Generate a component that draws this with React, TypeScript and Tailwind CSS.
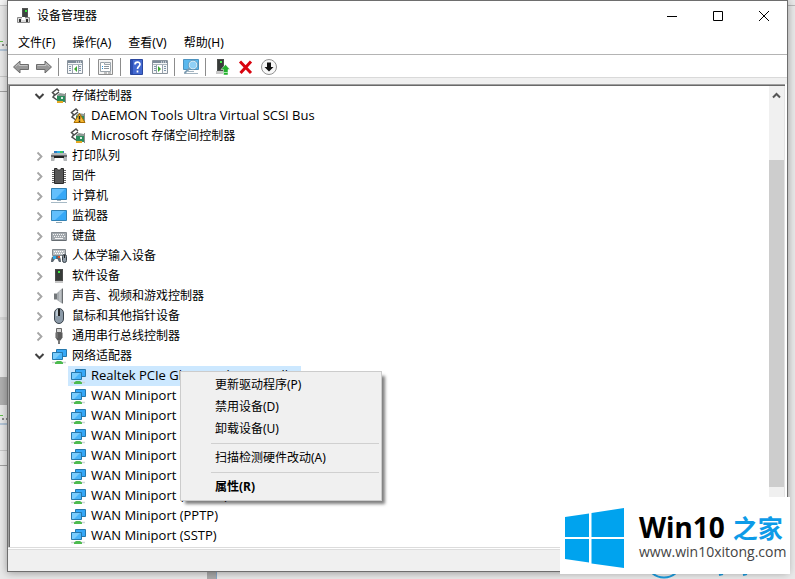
import { useState } from "react";
import type { ReactNode } from "react";

type IconName =
  | "storage"
  | "storageWarning"
  | "printer"
  | "chip"
  | "computer"
  | "monitor"
  | "keyboard"
  | "hid"
  | "tower"
  | "speaker"
  | "mouse"
  | "usb"
  | "network";

interface DeviceNode {
  label: string;
  icon: IconName;
  open?: boolean;
  children?: { label: string; suffix?: string; icon: IconName }[];
}

const menus = ["文件(F)", "操作(A)", "查看(V)", "帮助(H)"];

const devices: DeviceNode[] = [
  {
    label: "存储控制器",
    icon: "storage",
    open: true,
    children: [
      { label: "DAEMON Tools Ultra Virtual SCSI Bus", icon: "storageWarning" },
      { label: "Microsoft", suffix: "存储空间控制器", icon: "storage" },
    ],
  },
  { label: "打印队列", icon: "printer" },
  { label: "固件", icon: "chip" },
  { label: "计算机", icon: "computer" },
  { label: "监视器", icon: "monitor" },
  { label: "键盘", icon: "keyboard" },
  { label: "人体学输入设备", icon: "hid" },
  { label: "软件设备", icon: "tower" },
  { label: "声音、视频和游戏控制器", icon: "speaker" },
  { label: "鼠标和其他指针设备", icon: "mouse" },
  { label: "通用串行总线控制器", icon: "usb" },
  {
    label: "网络适配器",
    icon: "network",
    open: true,
    children: [
      { label: "Realtek PCIe GbE Family Controller", icon: "network" },
      { label: "WAN Miniport (IKEv2)", icon: "network" },
      { label: "WAN Miniport (IP)", icon: "network" },
      { label: "WAN Miniport (IPv6)", icon: "network" },
      { label: "WAN Miniport (L2TP)", icon: "network" },
      { label: "WAN Miniport (Monitor)", icon: "network" },
      { label: "WAN Miniport (PPPOE)", icon: "network" },
      { label: "WAN Miniport (PPTP)", icon: "network" },
      { label: "WAN Miniport (SSTP)", icon: "network" },
    ],
  },
];

const contextGroups = [
  ["更新驱动程序(P)", "禁用设备(D)", "卸载设备(U)"],
  ["扫描检测硬件改动(A)"],
  ["属性(R)"],
];

export default function App() {
  const [selected, setSelected] = useState("Realtek PCIe GbE Family Controller");

  return (
    <div className="relative min-h-screen overflow-hidden bg-[#e9e9e9] pr-[7px] pb-[6px] pl-[7px] font-['Noto_Sans','Noto_Sans_CJK_SC',sans-serif] text-xs text-black">
      <Backdrop />
      <div className="relative flex flex-col border border-[#6e6e6e] bg-white shadow-[0_1px_8px_rgba(0,0,0,0.35)]">
        <TitleBar />
        <nav className="flex h-[23px] items-center gap-[17px] border-b border-[#b4b4b4] px-2.5">
          {menus.map((menu) => (
            <button key={menu} type="button" className="leading-5">
              {menu}
            </button>
          ))}
        </nav>
        <Toolbar />
        <div className="h-[6px] bg-[#f0f0f0]" />
        <div className="mr-0.5 flex border-t border-l border-[#a0a0a0]">
          <div className="flex min-w-0 flex-1 border-t border-l border-[#696969]">
            <ul className="min-w-0 flex-1 pb-px">
              {devices.map((device) => (
                <DeviceGroup
                  key={device.label}
                  device={device}
                  selected={selected}
                  onSelect={setSelected}
                />
              ))}
            </ul>
            <Scrollbar />
          </div>
        </div>
        <div className="h-[3px] border-t border-b border-[#dcdcdc]" />
        <div className="h-[21px] bg-[#f0f0f0]" />
      </div>
      <ContextMenu />
      <Watermark />
    </div>
  );
}

function TitleBar() {
  return (
    <header className="flex h-[31px] items-center pb-0.5 pl-2">
      <Svg>
        <path d="M6 0h6v11H6z" fill="#555" />
        <path d="M7 1h4v9H7z" fill="#3d4440" />
        <path d="M9 2h2v2H9z" fill="#35e03a" />
        <path d="M1.500 9.500h12v5h-12z" fill="#dcdcdc" stroke="#8a8a8a" />
        <path d="M3 11h2v3H3zM10 11h2v3h-2z" fill="#333" />
        <path d="M6 9h3v3H6z" fill="#fff" />
      </Svg>
      <h1 className="ml-[5px] flex-1 leading-5">设备管理器</h1>
      <WindowButton label="最小化">
        <path d="M0 5.500h10" />
      </WindowButton>
      <WindowButton label="最大化">
        <path d="M.5.500h9v9h-9z" />
      </WindowButton>
      <WindowButton label="关闭">
        <path d="M0 0l10 10M10 0L0 10" />
      </WindowButton>
    </header>
  );
}

function WindowButton({ label, children }: { label: string; children: ReactNode }) {
  return (
    <button
      type="button"
      aria-label={label}
      className="flex h-[28px] w-[46px] items-center justify-center"
    >
      <svg width="10" height="10" viewBox="0 0 10 10" fill="none" stroke="#000" className="overflow-visible">
        {children}
      </svg>
    </button>
  );
}

function Svg({ children }: { children: ReactNode }) {
  return (
    <svg width="16" height="16" viewBox="0 0 16 16" fill="none" className="shrink-0">
      {children}
    </svg>
  );
}

function ToolButton({ label, children }: { label: string; children: ReactNode }) {
  return (
    <button type="button" aria-label={label} className="flex w-[23px] items-center justify-center">
      <Svg>{children}</Svg>
    </button>
  );
}

function Divider() {
  return <span className="mr-1 ml-[3px] h-[18px] w-px bg-[#8c8c8c]" />;
}

function Toolbar() {
  return (
    <div className="flex h-[23px] items-center border-b border-[#d9d9d9] pt-0.5 pl-px">
      <ToolButton label="后退">
        <path d="M.5 8L7 2v3.500h8.500v5H7V14z" fill="#989898" stroke="#6c6c6c" />
        <path d="M2.500 7.500L6 4.500v2h8.500" stroke="#c4c4c4" />
      </ToolButton>
      <ToolButton label="前进">
        <path d="M15.500 8L9 2v3.500H.5v5H9V14z" fill="#989898" stroke="#6c6c6c" />
        <path d="M13.500 7.500L10 4.500v2H1.500" stroke="#c4c4c4" />
      </ToolButton>
      <Divider />
      <ToolButton label="显示/隐藏控制台树">
        <ConsoleWindow />
        <path d="M6 6h5v8H6z" fill="#fff" />
        <path d="M10 7v6l-3-3z" fill="#3aa62f" />
        <path d="M5.500 6v8.500M11.500 6v8.500" stroke="#98a3ad" />
      </ToolButton>
      <Divider />
      <ToolButton label="属性">
        <path d="M.5.500h14v15H.5z" fill="#f4f4f4" stroke="#8e8e8e" />
        <path d="M2.500 3.500h4v2h6v7h-10z" fill="#fff" stroke="#9aa3aa" />
        <path d="M7 3.500h5.500v2" stroke="#9aa3aa" />
        <path d="M4 7.500h1M4 9.500h1" stroke="#2390d8" />
        <path d="M6 7.500h5M6 9.500h5" stroke="#8a949c" />
        <path d="M6 14h3M10 14h3" stroke="#888" />
      </ToolButton>
      <Divider />
      <ToolButton label="帮助">
        <path d="M1.500.500h12v15h-12z" fill="#4268d0" stroke="#2a479e" />
        <path d="M2 1h2v14H2z" fill="#2b4db2" />
        <path
          d="M6 5.500C6 2.500 11 2.300 11 5.300c0 2-2.500 2.200-2.500 4.700M8.500 11.500v2"
          stroke="#fff"
          strokeWidth="1.700"
        />
      </ToolButton>
      <ToolButton label="显示/隐藏操作窗格">
        <ConsoleWindow />
        <path d="M5 6h5v8H5z" fill="#fff" />
        <path d="M6 7v6l3-3z" fill="#3aa62f" />
        <path d="M4.500 6v8.500M10.500 6v8.500" stroke="#98a3ad" />
      </ToolButton>
      <Divider />
      <ToolButton label="扫描检测硬件改动">
        <path d="M.5.500h15v10H.5z" fill="#5ab8ee" stroke="#4c93c0" />
        <path d="M5 12.500h6M1 14.500h14" stroke="#a3b4c0" />
        <circle cx="10" cy="6" r="4" fill="#8fd0f6" stroke="#d4ecf9" />
        <circle cx="10" cy="6" r="4.700" stroke="#6b8ea6" strokeWidth=".6" />
        <path d="M6.500 9.500l-5 4.500" stroke="#7c9cb2" strokeWidth="1.800" />
      </ToolButton>
      <Divider />
      <span className="w-px" />
      <ToolButton label="更新驱动程序">
        <path d="M2 0h7v12l-1 2H2z" fill="#4c4f4d" />
        <path d="M3 1h5v10H3z" fill="#373b39" />
        <path d="M5 2h2v2H5z" fill="#43ee48" />
        <path d="M1 12h7v3H1z" fill="#c9c9c9" />
        <path d="M10.500 5.500l4.500 5h-2V16H8.500v-5.500H6z" fill="#22b02c" stroke="#fff" strokeWidth=".5" />
        <path d="M8.500 13.500H13" stroke="#a8e6ab" />
      </ToolButton>
      <ToolButton label="卸载设备">
        <path d="M2 2.500l11 11.500M13 2.500L2.500 14" stroke="#d9040f" strokeWidth="3" />
      </ToolButton>
      <ToolButton label="禁用设备">
        <circle cx="8" cy="8" r="7.500" fill="#f8f8f8" stroke="#929292" />
        <path d="M6 3.500h4V8h2.500L8 12.500 3.500 8H6z" fill="#111" />
      </ToolButton>
    </div>
  );
}

function ConsoleWindow() {
  return (
    <>
      <path d="M.5 1.500h15v13H.5z" fill="#f6f7f8" stroke="#8b949d" />
      <path d="M1 2h14v2H1z" fill="#7d8b99" />
      <path d="M9 3h1M11 3h1M13 3h1" stroke="#fff" />
      <path d="M1 5.500h14" stroke="#a9b3bc" />
      <path d="M2 7.500h2M2 9.500h2M2 11.500h2M12 7.500h2M12 9.500h2M12 11.500h2" stroke="#7f96ab" />
    </>
  );
}

interface DeviceGroupProps {
  device: DeviceNode;
  selected: string;
  onSelect: (label: string) => void;
}

function DeviceGroup({ device, selected, onSelect }: DeviceGroupProps) {
  const [open, setOpen] = useState(Boolean(device.open));

  return (
    <li>
      <button
        type="button"
        aria-expanded={open}
        onClick={() => setOpen(!open)}
        className="flex h-5 items-center pl-6 whitespace-nowrap"
      >
        <svg width="11" height="11" viewBox="0 0 11 11" fill="none" className="mr-1.5 shrink-0">
          {open ? (
            <path d="M1.500 3l4 4 4-4" stroke="#404040" strokeWidth="2" />
          ) : (
            <path d="M3.500 1.500l4 4-4 4" stroke="#a6a6a6" strokeWidth="1.800" />
          )}
        </svg>
        <DeviceIcon name={device.icon} />
        <span className="pl-[5px] leading-5">{device.label}</span>
      </button>
      {open && device.children && (
        <ul className="pl-[58px]">
          {device.children.map((child) => (
            <li key={child.label}>
              <button
                type="button"
                onClick={() => onSelect(child.label)}
                className={`flex h-5 items-center pl-0.5 whitespace-nowrap ${
                  child.label === selected ? "bg-[#cce8ff]" : ""
                }`}
              >
                <DeviceIcon name={child.icon} />
                <span className="pb-0.5 pl-[5px] font-['Open_Sans',sans-serif] text-[13px] leading-5">
                  {child.label}
                </span>
                {child.suffix && <span className="pl-[3px] leading-5">{child.suffix}</span>}
              </button>
            </li>
          ))}
        </ul>
      )}
    </li>
  );
}

function DeviceIcon({ name }: { name: IconName }) {
  return <Svg>{deviceIcons[name]}</Svg>;
}

const storageBase = (
  <>
    <path d="M8 3L6 1 1.500 4.500 4 7l4-3M3.500 7L2 9l4 3" stroke="#4c4c4c" strokeWidth="1.500" />
    <path d="M6 7l3-2 5 1v8l-8-1z" fill="#8d9a94" />
    <path d="M6 8h8v6l-8-1z" fill="#2b8c5c" />
    <path d="M10 9h2v2h-2z" fill="#d9eee2" />
    <path d="M6 13h6v2H6z" fill="#e5a823" />
    <path d="M14.500 5v10" stroke="#8c8c8c" />
  </>
);

const deviceIcons: Record<IconName, ReactNode> = {
  storage: storageBase,
  storageWarning: (
    <>
      {storageBase}
      <path d="M9.500 5.500l5.500 9H4z" fill="#f7b731" stroke="#a86d00" />
      <path d="M9.500 8v3.500M9.500 12.500V14" stroke="#222" strokeWidth="1.500" />
    </>
  ),
  printer: (
    <>
      <path d="M3 3h10v3H3z" fill="#2d7bc4" />
      <path d="M6 3h3v2H6z" fill="#2bb4df" />
      <path d="M9 3h3v2H9z" fill="#35c45a" />
      <path d="M1 5h14l1 2v6H0V7z" fill="#b4b7b9" />
      <path d="M0 7h16v2H0z" fill="#6c6f72" />
      <path d="M3 8h10v2H3z" fill="#222" />
      <path d="M4 10h8l1 4H3z" fill="#fff" />
    </>
  ),
  chip: (
    <>
      <path d="M1 2.500h14M1 4.500h14M1 6.500h14M1 8.500h14M1 10.500h14M1 12.500h14M1 14.500h14" stroke="#666" />
      <path d="M3.500.500H6c0 2 4 2 4 0h2.500v15h-9z" fill="#575757" stroke="#2c2c2c" />
    </>
  ),
  computer: (
    <>
      <path d="M.5.500h15v11H.5z" fill="#36a8f7" stroke="#3382b4" />
      <path d="M1 1h13L4 11H1z" fill="#62bffc" />
      <path d="M6 12h4v1H6z" fill="#9fb4c1" />
      <path d="M0 14.500h16" stroke="#a7bac6" />
    </>
  ),
  monitor: (
    <>
      <path d="M.5 2.500h15v10H.5z" fill="#36a8f7" stroke="#3382b4" />
      <path d="M1 3h13L4 12H1z" fill="#62bffc" />
      <path d="M5 14.500h6" stroke="#8ea7b6" />
    </>
  ),
  keyboard: (
    <>
      <path d="M.5 4.500h15v8H.5z" fill="#a3a9ae" stroke="#858b90" />
      <path d="M2 6.500h12M3 8.500h11" stroke="#f4f4f4" strokeDasharray="1 1" />
      <path d="M4 10.500h8" stroke="#f4f4f4" />
      <path d="M1 12.500h14" stroke="#666c71" />
    </>
  ),
  hid: (
    <>
      <path d="M1.500 1.500h13v6h-13z" fill="#b9bec2" stroke="#858b90" />
      <path d="M3 3.500h10M4 5.500h9" stroke="#fff" strokeDasharray="1 1" />
      <path d="M0 14c0-4 1-6 3-6h4c2 0 3 2 3 6H8l-1.500-3H4L2 14z" fill="#5d6770" />
      <path d="M2 8h3v3H2z" fill="#2da9e8" />
      <path d="M7 8h2v2H7z" fill="#e0502a" />
      <rect x="11.500" y="6.500" width="4" height="8" rx="2" fill="#8c98a3" stroke="#39424a" />
      <path d="M13.500 7v3" stroke="#222" />
    </>
  ),
  tower: (
    <>
      <path d="M4 1h8v12H4z" fill="#4a4a4a" />
      <path d="M5 2h6v10H5z" fill="#363b38" />
      <path d="M7 3h2v2H7z" fill="#3dee42" />
      <path d="M4 13h8v2H4z" fill="#c6c6c6" />
    </>
  ),
  speaker: (
    <>
      <path d="M3 5.500h3v6H3z" fill="#73777a" />
      <path d="M6 5l5-4.500v15L6 12z" fill="#a6abaf" />
      <path d="M9 2.500v11" stroke="#d2d5d7" />
      <path d="M11.500.500v15" stroke="#686c6f" />
    </>
  ),
  mouse: (
    <>
      <rect x="3.500" y=".5" width="9" height="15" rx="4.500" fill="#8b9aa8" stroke="#3c454d" />
      <path d="M5 4c0-2 1-3 2-3v7H5z" fill="#bcc8d1" />
      <path d="M8 1v7" stroke="#222" strokeWidth="2" />
    </>
  ),
  usb: (
    <>
      <path d="M5.500.500h5v4h-5z" fill="#d5d5d5" stroke="#666" />
      <path d="M4.500 4.500h7v5l-2 3h-3l-2-3z" fill="#5b5b5b" />
      <path d="M6 5v5" stroke="#858585" />
      <path d="M8 12v4" stroke="#777" strokeWidth="2" />
    </>
  ),
  network: (
    <>
      <path d="M5.500 1.500h10v7h-10z" fill="#36a8f7" stroke="#2678ac" />
      <path d="M1.500 4.500h10v7h-10z" fill="#48b5fa" stroke="#2678ac" />
      <path d="M2 5h8l-6 6H2z" fill="#79cdfd" />
      <path d="M1 14.500h14" stroke="#d0d5d8" strokeWidth="1.500" />
      <path d="M6 13h4l2 1.500V16H4v-1.500z" fill="#4dbb4f" />
    </>
  ),
};

function Scrollbar() {
  return (
    <div className="flex w-4 flex-col border-r border-[#e3e3e3] bg-[#f0f0f0]">
      <button type="button" aria-label="向上滚动" className="flex h-[74px] justify-center pt-1.5">
        <svg width="9" height="7" viewBox="0 0 9 7" fill="none">
          <path d="M1 5.500L4.500 2 8 5.500" stroke="#555" strokeWidth="2" />
        </svg>
      </button>
      <div className="h-[327px] bg-[#cdcdcd]" />
    </div>
  );
}

function ContextMenu() {
  return (
    <div
      role="menu"
      className="absolute top-[371px] left-[180px] w-[202px] border border-[#cccccc] bg-[#f0f0f0] p-0.5 shadow-[4px_4px_3px_-1px_rgba(0,0,0,0.5)]"
    >
      {contextGroups.map((group, index) => (
        <div key={group[0]}>
          {index > 0 && <hr className="my-[3px] ml-7 border-[#d0d0d0]" />}
          {group.map((item) => (
            <button
              key={item}
              type="button"
              role="menuitem"
              className={`block h-[22px] w-full pl-8 text-left leading-5 ${
                item === "属性(R)" ? "font-bold" : ""
              }`}
            >
              {item}
            </button>
          ))}
        </div>
      ))}
    </div>
  );
}

function Watermark() {
  return (
    <div className="absolute right-[5px] bottom-[5px] flex h-[77px] w-[230px] items-center bg-white pl-[5px]">
      <svg width="59" height="60" viewBox="0 0 59 60" fill="#00a3ee" className="mt-1 shrink-0">
        <path d="M0 9l24-3.500V29H0zM26.500 5L59 0v29H26.500zM0 31h24v23.500L0 51zM26.500 31H59v29l-32.500-4.500z" />
      </svg>
      <div className="ml-[15px] whitespace-nowrap">
        <p className="flex items-baseline gap-2 text-[28px] leading-8 font-bold">
          Win10
          <span className="text-[25px] leading-8 text-[#0d9be8]">之家</span>
        </p>
        <p className="font-['Open_Sans',sans-serif] text-sm leading-4 text-[#444]">
          www.win10xitong.com
        </p>
      </div>
    </div>
  );
}

// Slivers of the other windows lying behind the device manager
function Backdrop() {
  return (
    <div aria-hidden="true" className="absolute inset-0">
      <svg width="8" height="579" viewBox="0 0 8 579" className="absolute top-0 left-0">
        <path d="M0 0h8v5H0z" fill="#f5f5f5" />
        <path d="M0 5h8v1H0zM0 76h8v1H0zM0 450h8v1H0z" fill="#c8c8c8" />
        <path d="M0 91h8v1H0zM0 465h8v1H0z" fill="#a0a0a0" />
        <path d="M0 317h8v3H0z" fill="#d6d6d6" />
        <path d="M0 377h8v28H0z" fill="#b0b0b0" />
        <path d="M0 41h3v1H0zM0 415h3v1H0z" fill="#62bd4c" />
        <path d="M2 44h2v2H2zM2 418h2v2H2zM6 44h1v2H6zM6 418h1v2H6z" fill="#888" />
        <path d="M0 49h8v2H0zM0 423h8v2H0z" fill="#b4c6d8" />
      </svg>
      <div className="absolute top-[5px] right-0 h-px w-2 bg-[#b8b8b8]" />
      <div className="absolute bottom-0 left-[207px] h-[7px] w-[10px] border-r border-[#8aa9c8] bg-[#ababab]" />
      <svg width="110" height="6" viewBox="0 0 110 6" fill="none" className="absolute right-[35px] bottom-0">
        <path d="M2 0c7 6 17 6 24 0M69 2l4-1M93 2l4-1" stroke="#1d9bdc" strokeWidth="2" />
      </svg>
    </div>
  );
}
